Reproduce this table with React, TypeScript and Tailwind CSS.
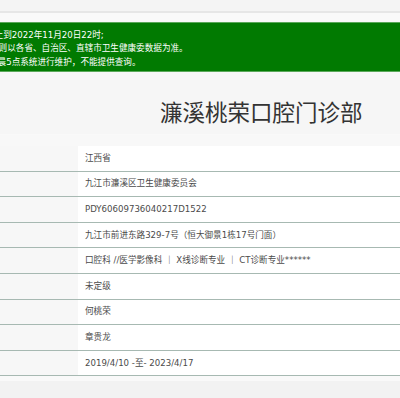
import React from "react";

const rows = [
  "江西省",
  "九江市濂溪区卫生健康委员会",
  "PDY60609736040217D1522",
  "九江市前进东路329-7号（恒大御景1栋17号门面）",
  "口腔科 //医学影像科 ｜ X线诊断专业 ｜ CT诊断专业******",
  "未定级",
  "何桃荣",
  "章贵龙",
  "2019/4/10 -至- 2023/4/17",
];

export default function App() {
  const font = { fontFamily: '"DejaVu Sans", "Noto Sans CJK SC", sans-serif' };
  return (
    <div className="w-[400px] h-[398px] overflow-hidden bg-[#f5f5f5]" style={font}>
      <div className="h-[11px] bg-[#f4f4f4]" />
      <div className="h-[2px] bg-[#e6e6e6]" />
      <div className="h-[9px] bg-[#f9f9f9]" />
      <div className="h-[50px] bg-[#017a01] border-y border-[#5aa85a] overflow-hidden text-white text-[8.6px] leading-[13.5px] pt-[5.5px] whitespace-nowrap">
        <div className="ml-[-14px]">截止到2022年11月20日22时;</div>
        <div className="ml-[-10px]">原则以各省、自治区、直辖市卫生健康委数据为准。</div>
        <div className="ml-[-11px]">凌晨5点系统进行维护，不能提供查询。</div>
      </div>
      <div className="h-[63px] bg-[#f6f6f6] flex items-center pl-[160px] pt-[17px] border-b border-[#f9f9f9]">
        <span className="text-[22.5px] leading-none text-[#333] whitespace-nowrap" style={{ fontFamily: '"Noto Sans CJK SC", sans-serif' }}>濂溪桃荣口腔门诊部</span>
      </div>
      <div className="h-[11px] bg-[#f8f8f8]" />
      <div className="flex flex-col">
        {rows.map((r, i) => (
          <div key={i} className="flex h-[25.6px] border-b border-[#a7b9b2]">
            <div className="w-[78px] bg-[#f7f7f7]" />
            <div className="flex-1 bg-white flex items-center pl-[7px] text-[8.6px] text-[#4a4a4a] whitespace-nowrap">
              {r}
            </div>
          </div>
        ))}
      </div>
      <div className="h-[5px] bg-[#f9f9f9]" />
      <div className="bg-[#f2f2f2] h-[20px]" />
    </div>
  );
}
